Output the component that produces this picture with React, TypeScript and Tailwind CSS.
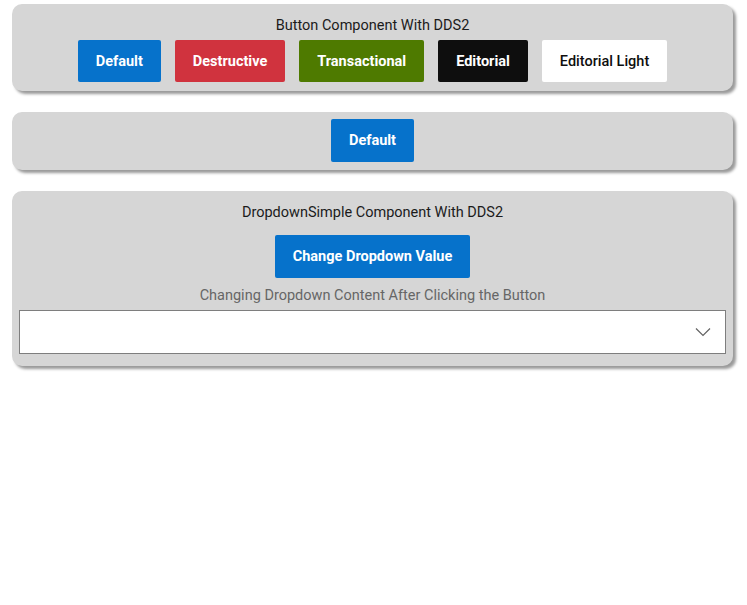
import React from 'react';

const buttons = [
  { label: 'Default', cls: 'bg-[#0672cb] text-white font-bold' },
  { label: 'Destructive', cls: 'bg-[#d0333e] text-white font-bold' },
  { label: 'Transactional', cls: 'bg-[#4e7a00] text-white font-bold' },
  { label: 'Editorial', cls: 'bg-[#0e0e0e] text-white font-bold' },
  { label: 'Editorial Light', cls: 'bg-white text-[#0e0e0e] font-medium' },
];

const Card: React.FC<{ children: React.ReactNode; className?: string }> = ({ children, className }) => (
  <div
    className={`bg-[#d6d6d6] rounded-[10px] shadow-[3px_3px_3px_#9a9a9a] flex flex-col items-center ${className ?? ''}`}
  >
    {children}
  </div>
);

export default function App() {
  return (
    <div className="min-h-screen bg-white pl-[12px] pr-[14px] pt-[4px] font-['Roboto',sans-serif] text-[14.5px] flex flex-col gap-[21px] w-[747px]">
      {/* Buttons */}
      <Card className="pt-[13px] pb-[9px] px-[7px]">
        <div className="text-[#1b1b1b] leading-[18px]">Button Component With DDS2</div>
        <div className="flex gap-[14px] mt-[5px]">
          {buttons.map((b) => (
            <button
              key={b.label}
              className={`h-[42px] pt-[1px] px-[18px] rounded-[2px] text-[14.5px] ${b.cls}`}
            >
              {b.label}
            </button>
          ))}
        </div>
      </Card>

      {/* Single default */}
      <Card className="pt-[7px] pb-[8px]">
        <button className="h-[43px] px-[18px] rounded-[2px] bg-[#0672cb] text-white font-bold">Default</button>
      </Card>

      {/* Dropdown */}
      <Card className="pt-[13px] pb-[12px] px-[7px]">
        <div className="text-[#1b1b1b] leading-[18px]">DropdownSimple Component With DDS2</div>
        <button className="mt-[13px] h-[43px] px-[18px] rounded-[2px] bg-[#0672cb] text-white font-bold">
          Change Dropdown Value
        </button>
        <div className="mt-[8px] text-[#666666] leading-[20px]">Changing Dropdown Content After Clicking the Button</div>
        <div className="mt-[4px] w-full h-[44px] bg-white border border-[#7e7e7e] flex items-center justify-end pr-[14px]">
          <svg width="16" height="10" viewBox="0 0 16 10" fill="none" stroke="#636363" strokeWidth="1.2">
            <path d="M1 1.5 L8 8.5 L15 1.5" />
          </svg>
        </div>
      </Card>
    </div>
  );
}
